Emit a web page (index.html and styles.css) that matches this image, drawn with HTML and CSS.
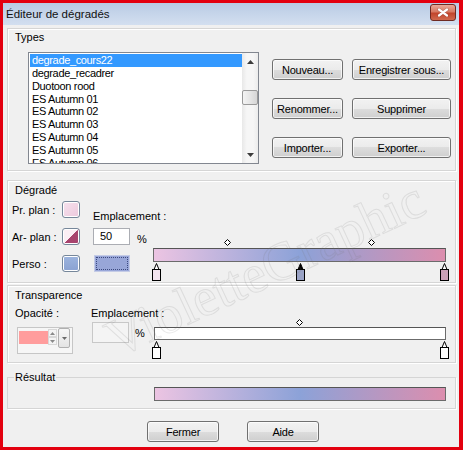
FILE: index.html
```html
<!DOCTYPE html>
<html lang="fr">
<head>
<meta charset="utf-8">
<title>Éditeur de dégradés</title>
<link rel="stylesheet" href="styles.css">
</head>
<body>
<div class="win">
  <div class="titlebar">
    <span class="title">Éditeur de dégradés</span>
    <span class="close"><svg width="12" height="9" viewBox="0 0 12 9"><path d="M2 1.5 L10 7.5 M10 1.5 L2 7.5" stroke="#5a1a10" stroke-width="3.2" stroke-linecap="round" opacity="0.35"/><path d="M2 1.5 L10 7.5 M10 1.5 L2 7.5" stroke="#fff" stroke-width="2.2" stroke-linecap="round"/></svg></span>
  </div>

  <div class="group g-types">
    <div class="legend">Types</div>
    <div class="types-body">
      <div class="list">
        <div class="items">
          <div class="item sel">degrade_cours22</div>
          <div class="item">degrade_recadrer</div>
          <div class="item">Duotoon rood</div>
          <div class="item">ES Autumn 01</div>
          <div class="item">ES Autumn 02</div>
          <div class="item">ES Autumn 03</div>
          <div class="item">ES Autumn 04</div>
          <div class="item">ES Autumn 05</div>
          <div class="item">ES Autumn 06</div>
        </div>
        <div class="sb">
          <div class="sb-btn"><svg width="7" height="4" viewBox="0 0 7 4"><path d="M0 4 L3.5 0 L7 4 Z" fill="#3c3c3c"/></svg></div>
          <div class="sb-track"><div class="sb-thumb"></div></div>
          <div class="sb-btn"><svg width="7" height="4" viewBox="0 0 7 4"><path d="M0 0 L3.5 4 L7 0 Z" fill="#3c3c3c"/></svg></div>
        </div>
      </div>
      <div class="btns">
        <button class="btn">Nouveau...</button>
        <button class="btn">Enregistrer sous...</button>
        <button class="btn">Renommer...</button>
        <button class="btn">Supprimer</button>
        <button class="btn">Importer...</button>
        <button class="btn">Exporter...</button>
      </div>
    </div>
  </div>

  <div class="group g-grad">
    <div class="legend tall">Dégradé</div>
    <div class="grad-body">
      <div class="swgrid">
        <span>Pr. plan :</span><span class="sw sw-pr"></span>
        <span>Ar- plan :</span><span class="sw sw-ar"></span>
        <span>Perso :</span><span class="sw sw-perso"></span>
      </div>
      <div class="mid">
        <span class="mid-lbl">Emplacement :</span>
        <div class="inrow"><span class="num">50</span><span class="pct">%</span></div>
        <span class="dotted"></span>
      </div>
      <div class="stops s-grad">
        <svg class="dia" style="left:75px" width="7" height="7" viewBox="0 0 7 7"><path d="M3.5 0.5 L6.5 3.5 L3.5 6.5 L0.5 3.5 Z" fill="#fff" stroke="#000"/></svg>
        <svg class="dia" style="left:219px" width="7" height="7" viewBox="0 0 7 7"><path d="M3.5 0.5 L6.5 3.5 L3.5 6.5 L0.5 3.5 Z" fill="#fff" stroke="#000"/></svg>
        <div class="bar bar-grad"></div>
        <svg class="mk" style="left:3px" width="9" height="18" viewBox="0 0 9 18"><path d="M4.5 0.5 L7 6.5 H2 Z" fill="#fff" stroke="#000"/><rect x="0.5" y="6.5" width="8" height="11" fill="#f3e4ef" stroke="#000"/></svg>
        <svg class="mk" style="left:147px" width="9" height="18" viewBox="0 0 9 18"><path d="M4.5 0.5 L7 6.5 H2 Z" fill="#000" stroke="#000"/><rect x="0.5" y="6.5" width="8" height="11" fill="#9aa3c6" stroke="#000"/></svg>
        <svg class="mk" style="left:291px" width="9" height="18" viewBox="0 0 9 18"><path d="M4.5 0.5 L7 6.5 H2 Z" fill="#fff" stroke="#000"/><rect x="0.5" y="6.5" width="8" height="11" fill="#caa1b6" stroke="#000"/></svg>
      </div>
    </div>
  </div>

  <div class="group g-tr">
    <div class="legend tall">Transparence</div>
    <div class="tr-body">
      <div class="col1">
        <span class="row-lbl">Opacité :</span>
        <div class="spin">
          <span class="pink"></span>
          <span class="arrows">
            <span class="ar"><svg width="5" height="3" viewBox="0 0 5 3"><path d="M0 3 L2.5 0 L5 3 Z" fill="#8a8a8a"/></svg></span>
            <span class="ar"><svg width="5" height="3" viewBox="0 0 5 3"><path d="M0 0 L2.5 3 L5 0 Z" fill="#8a8a8a"/></svg></span>
          </span>
          <span class="dd"><svg width="5" height="3" viewBox="0 0 5 3"><path d="M0 0 L2.5 3 L5 0 Z" fill="#6a6a6a"/></svg></span>
        </div>
      </div>
      <div class="col2">
        <span class="row-lbl">Emplacement :</span>
        <div class="inrow2"><span class="num dis"></span><span class="pct2">%</span></div>
      </div>
      <div class="stops s-tr">
        <svg class="dia" style="left:147px" width="7" height="7" viewBox="0 0 7 7"><path d="M3.5 0.5 L6.5 3.5 L3.5 6.5 L0.5 3.5 Z" fill="#fff" stroke="#000"/></svg>
        <div class="bar bar-white"></div>
        <svg class="mk" style="left:3px" width="9" height="18" viewBox="0 0 9 18"><path d="M4.5 0.5 L7 6.5 H2 Z" fill="#fff" stroke="#000"/><rect x="0.5" y="6.5" width="8" height="11" fill="#fff" stroke="#000"/></svg>
        <svg class="mk" style="left:291px" width="9" height="18" viewBox="0 0 9 18"><path d="M4.5 0.5 L7 6.5 H2 Z" fill="#fff" stroke="#000"/><rect x="0.5" y="6.5" width="8" height="11" fill="#fff" stroke="#000"/></svg>
      </div>
    </div>
  </div>

  <fieldset class="res">
    <legend>Résultat</legend>
    <div class="bar bar-res"></div>
  </fieldset>

  <div class="foot">
    <button class="btn fbtn">Fermer</button>
    <button class="btn fbtn">Aide</button>
  </div>

  <div class="wm">VioletteGraphic</div>
</div>
</body>
</html>
```

FILE: styles.css
```css
* { box-sizing: border-box; }

body {
  margin: 0;
  font-family: "Liberation Sans", Arial, sans-serif;
  font-size: 11px;
  color: #000;
}

.win {
  position: relative;
  width: 463px;
  height: 450px;
  border: 3px solid #e3000f;
  border-right-width: 4px;
  background: #f0f0f0;
  overflow: hidden;
}

.titlebar {
  height: 22px;
  display: flex;
  justify-content: space-between;
  align-items: center;
  padding-left: 3px;
  background: linear-gradient(#b9cbe4, #d3dff0);
}

.title {
  font-size: 11.5px;
  color: #111;
}

.close {
  align-self: flex-start;
  margin: 1px 3px 0 0;
  width: 26px;
  height: 17px;
  border: 1px solid #6e2a22;
  border-radius: 3px;
  background: linear-gradient(#eaa998, #d77a63 45%, #c2452c 55%, #d06a4e);
  display: flex;
  align-items: center;
  justify-content: center;
}

.group {
  margin-left: 4px;
  width: 449px;
  border: 1px solid #d5d5d5;
  box-shadow: inset 1px 1px 0 #fff, 1px 1px 0 #fff;
}

.legend {
  height: 16px;
  line-height: 16px;
  padding-left: 7px;
}

.legend.tall {
  height: 18px;
  line-height: 18px;
}

/* Types */
.g-types {
  margin-top: 3px;
  height: 143px;
}

.types-body {
  display: flex;
  align-items: flex-start;
  margin-top: 7px;
  padding-left: 20px;
}

.list {
  display: flex;
  width: 231px;
  height: 112px;
  border: 1px solid #828790;
  background: #fff;
}

.items {
  flex: 1;
  padding: 1px 0 0 1px;
  overflow: hidden;
}

.item {
  height: 12.85px;
  line-height: 12.85px;
  padding-left: 2px;
  white-space: nowrap;
  letter-spacing: -0.35px;
}

.item.sel {
  background: #3399ff;
  color: #fff;
}

.sb {
  width: 16px;
  display: flex;
  flex-direction: column;
  background: linear-gradient(90deg, #e8e8e8, #f6f6f6 30%, #f6f6f6 70%, #ececec);
}

.sb-btn {
  height: 17px;
  display: flex;
  align-items: center;
  justify-content: center;
}

.sb-track {
  flex: 1;
}

.sb-thumb {
  margin: 20px 0 0 0;
  height: 15px;
  border: 1px solid #9a9a9a;
  border-radius: 2px;
  background: linear-gradient(90deg, #f4f4f4, #e6e6e6 50%, #d6d6d6);
}

.btns {
  display: grid;
  grid-template-columns: 71px 99px;
  grid-auto-rows: 21px;
  column-gap: 9px;
  row-gap: 18px;
  margin: 7px 0 0 13px;
}

.btn {
  font: inherit;
  color: #000;
  padding: 0;
  border: 1px solid #707070;
  border-radius: 3px;
  background: linear-gradient(#f2f2f2, #ebebeb 50%, #dddddd 50%, #cfcfcf);
  box-shadow: inset 0 0 0 1px rgba(255, 255, 255, 0.7);
  letter-spacing: -0.2px;
}

/* Dégradé */
.g-grad {
  margin-top: 9px;
  height: 103px;
}

.grad-body {
  display: flex;
  align-items: flex-start;
  margin-top: 2px;
}

.swgrid {
  display: grid;
  grid-template-columns: 50px 18px;
  grid-auto-rows: 17px;
  row-gap: 10px;
  padding-left: 4px;
  align-items: center;
  white-space: nowrap;
}

.sw {
  width: 18px;
  height: 17px;
  border: 1px solid #76879a;
  border-radius: 3px;
  box-shadow: inset 0 0 0 1px #fff;
}

.sw-pr {
  background: linear-gradient(135deg, #f6e2ee, #ecc8dc);
}

.sw-ar {
  background: linear-gradient(to top left, #a8446e 50%, #fbeef4 50%);
}

.sw-perso {
  background: linear-gradient(#9cb4de, #8aa2d2);
}

.mid {
  width: 56px;
  margin-left: 13px;
  display: flex;
  flex-direction: column;
  white-space: nowrap;
}

.mid-lbl {
  margin-top: 9px;
  line-height: 13px;
}

.inrow {
  display: flex;
  align-items: flex-end;
  margin-top: 5px;
}

.num {
  width: 37px;
  height: 17px;
  border: 1px solid #abadb3;
  background: #fff;
  padding-left: 6px;
  line-height: 15px;
}

.pct {
  margin-left: 7px;
  line-height: 12px;
}

.dotted {
  margin: 10px 0 0 1px;
  width: 36px;
  height: 17px;
  background: #98a6d8;
  border: 1px solid #c4cbe6;
  outline: 1px dotted #3d4a80;
  outline-offset: -3px;
}

.stops {
  position: relative;
  width: 300px;
  margin-right: 6px;
  margin-left: auto;
}

.s-grad {
  height: 44px;
  margin-top: 37px;
}

.dia {
  position: absolute;
  top: 1px;
  display: block;
}

.mk {
  position: absolute;
  display: block;
}

.s-grad .mk { top: 25px; }

.bar {
  border: 1px solid #6b6b6b;
  border-top-color: #555;
}

.bar-grad {
  margin: 10px 0 0 4px;
  width: 293px;
  height: 14px;
  background: linear-gradient(90deg, #ecc4e2, #8ca2d8 50%, #dc8eae);
}

/* Transparence */
.g-tr {
  margin-top: 2px;
  height: 78px;
}

.tr-body {
  display: flex;
  align-items: flex-start;
  margin-top: 2px;
}

.row-lbl {
  display: block;
  line-height: 14px;
  white-space: nowrap;
}

.col1 {
  width: 83px;
  padding-left: 7px;
}

.spin {
  display: flex;
  align-items: flex-start;
  margin: 7px 0 0 2px;
  width: 56px;
  height: 27px;
  border: 1px solid #c6c6c6;
  background: #f6f6f6;
}

.pink {
  margin: 3px 0 0 1px;
  width: 29px;
  height: 13px;
  background: #ff9d9d;
}

.arrows {
  margin-top: 1px;
  width: 9px;
  height: 16px;
  display: flex;
  flex-direction: column;
}

.ar {
  flex: 1;
  display: flex;
  align-items: center;
  justify-content: center;
  border: 1px solid #d8d8d8;
  background: #f4f4f4;
}

.dd {
  margin-left: 1px;
  width: 12px;
  height: 20px;
  border: 1px solid #b0b0b0;
  border-radius: 2px;
  background: linear-gradient(#f6f6f6, #e4e4e4);
  display: flex;
  align-items: center;
  justify-content: center;
}

.col2 {
  width: 58px;
}

.inrow2 {
  display: flex;
  align-items: center;
  margin-top: 2px;
}

.num.dis {
  margin-left: 1px;
  height: 21px;
  background: #f4f4f4;
  border-color: #c8c8c8;
}

.pct2 {
  margin-left: 6px;
}

.s-tr {
  height: 41px;
  margin-top: 12px;
}

.s-tr .mk { top: 23px; }

.bar-white {
  margin: 9px 0 0 5px;
  width: 292px;
  height: 13px;
  background: #fff;
}

/* Résultat */
.res {
  margin: 7px 0 0 4px;
  padding: 0 0 7px 0;
  min-width: 0;
  width: 449px;
  border: 1px solid #d5d5d5;
  box-shadow: 1px 1px 0 #fff;
}

.res legend {
  margin-left: 6px;
  padding: 0 1px;
  line-height: 14px;
}

.bar-res {
  margin: 3px 0 0 146px;
  width: 292px;
  height: 14px;
  background: linear-gradient(90deg, #ecc4e2, #8ca2d8 50%, #dc8eae);
}

/* Footer */
.foot {
  display: flex;
  justify-content: center;
  gap: 28px;
  margin-top: 12px;
  padding-left: 4px;
}

.fbtn {
  width: 72px;
  height: 21px;
}

/* Watermark */
.wm {
  position: absolute;
  left: 62px;
  top: 236px;
  width: 400px;
  text-align: center;
  font-family: "Liberation Serif", serif;
  font-size: 54px;
  line-height: 60px;
  color: transparent;
  -webkit-text-stroke: 1px rgba(120, 120, 120, 0.16);
  transform: rotate(-25deg);
  pointer-events: none;
}
```
